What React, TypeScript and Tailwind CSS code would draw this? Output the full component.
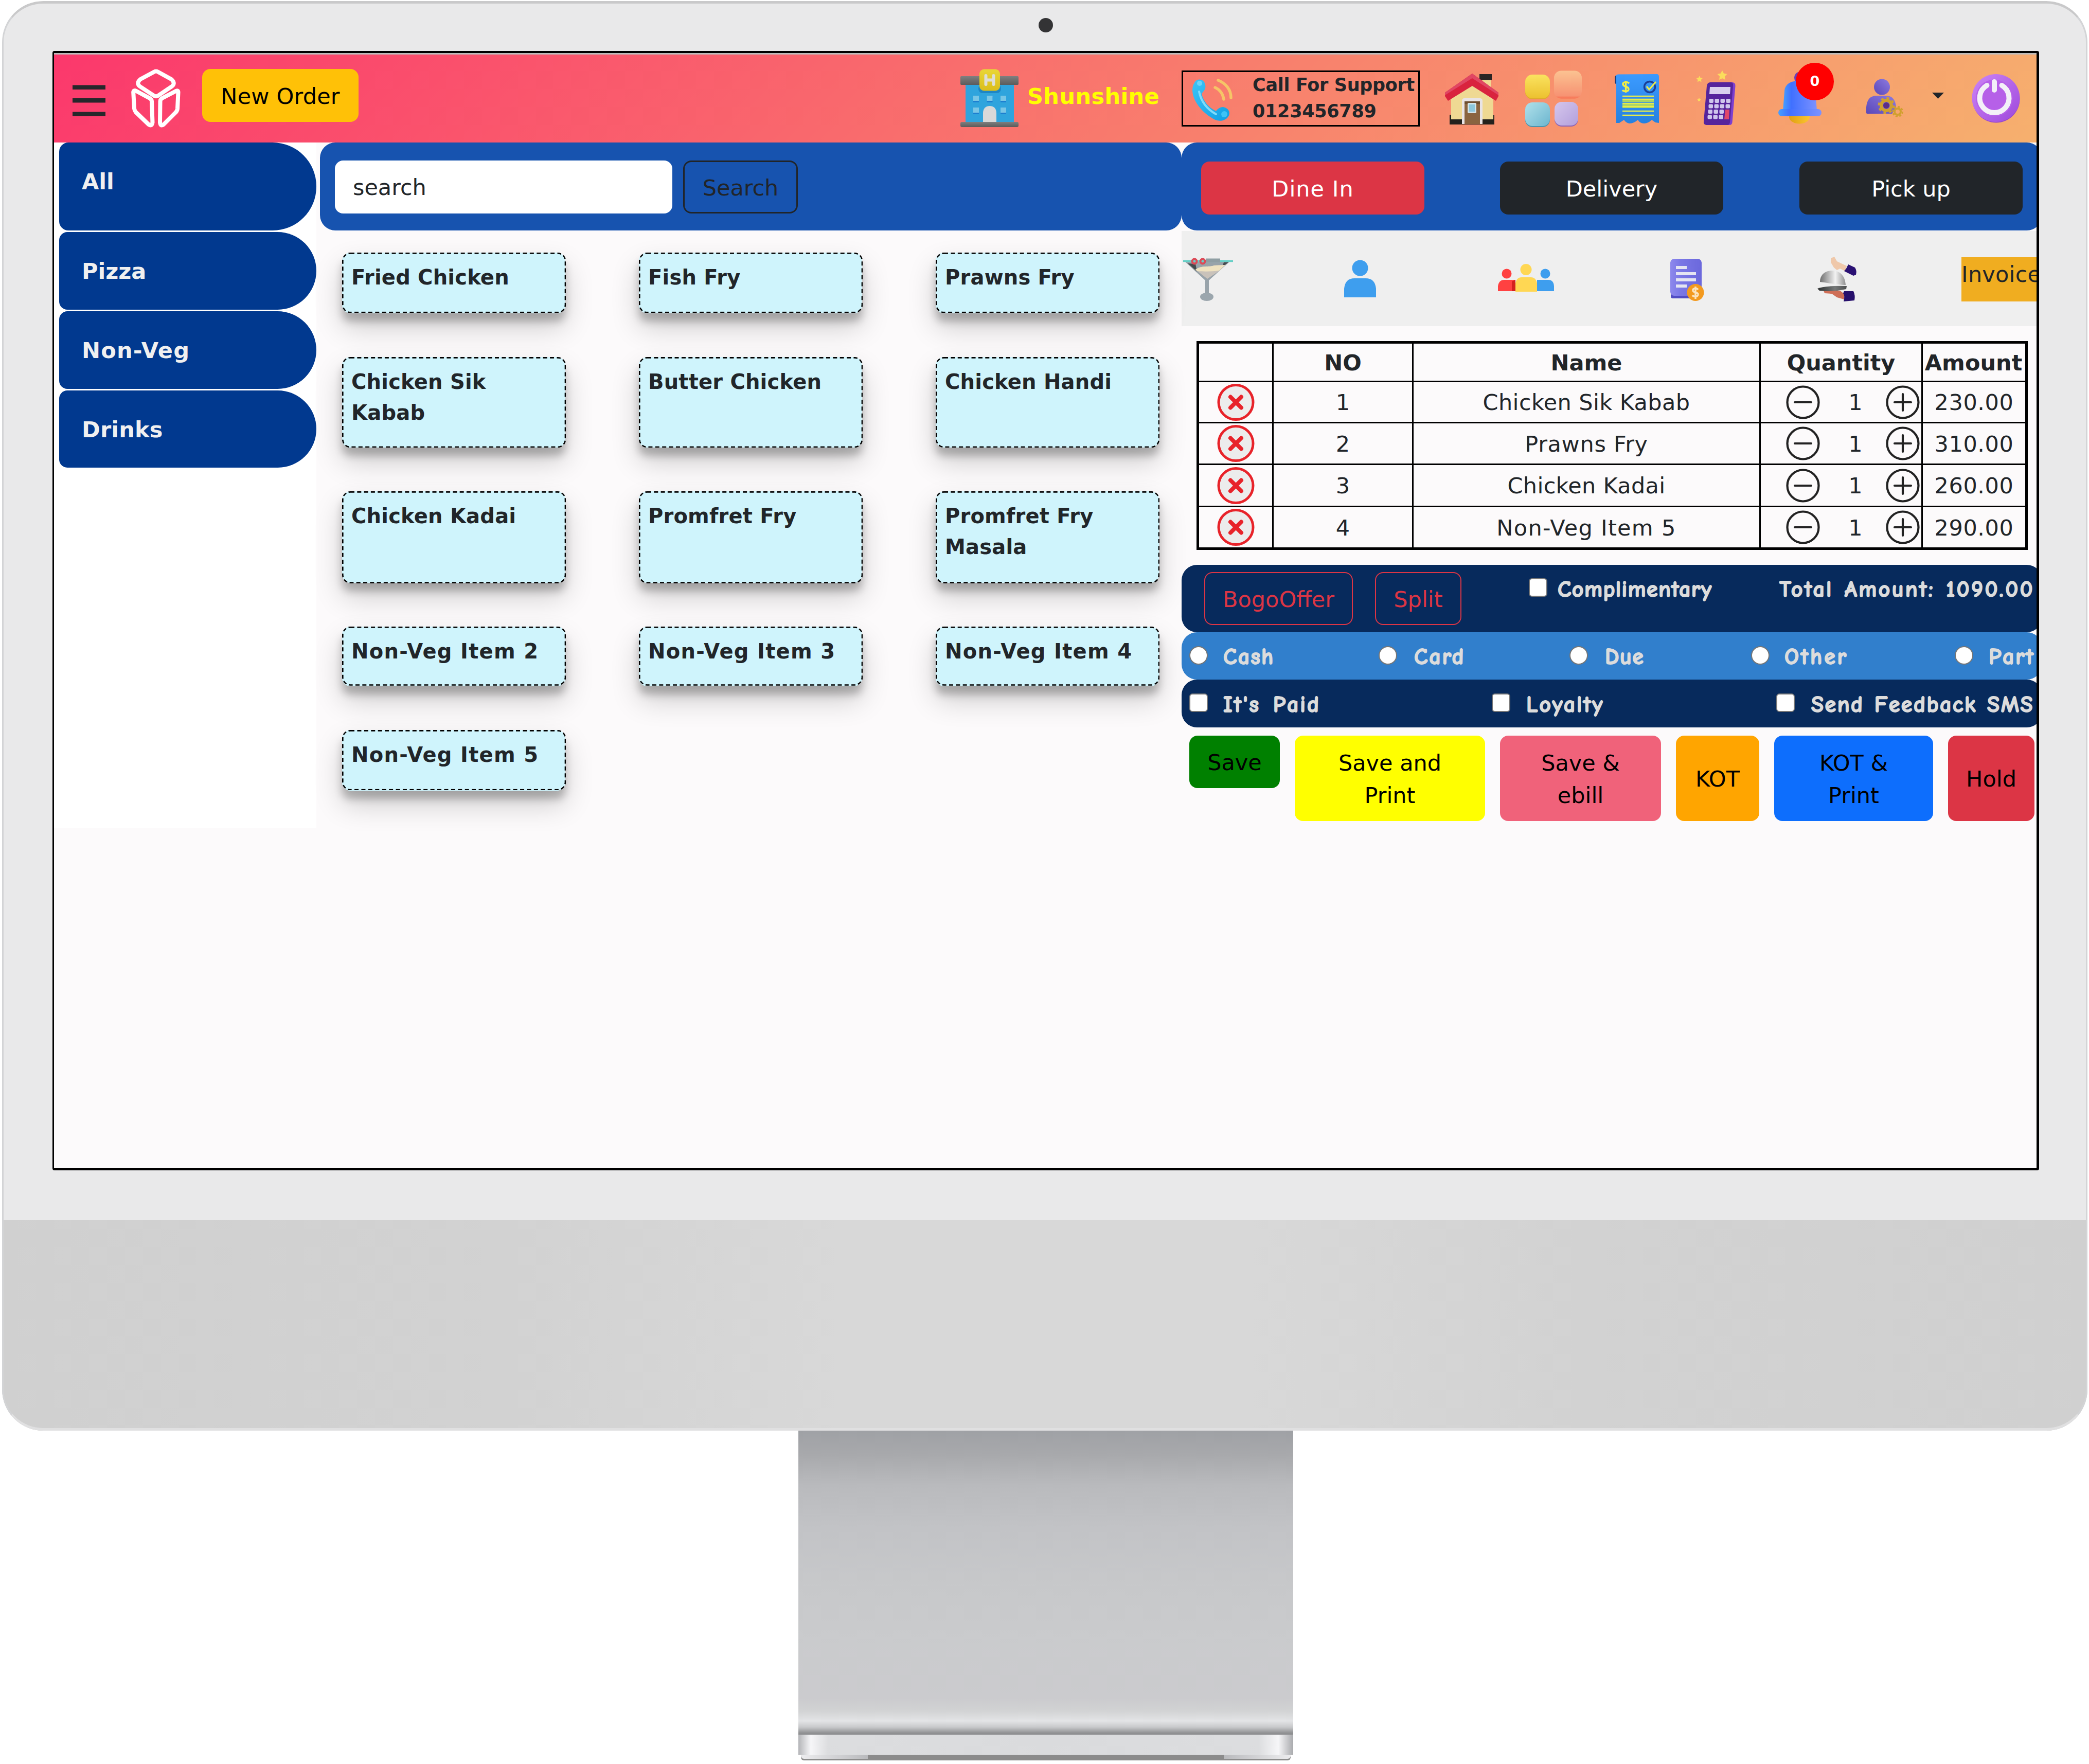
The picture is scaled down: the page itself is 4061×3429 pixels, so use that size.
import React from "react";

/* ---------- header icons ---------- */

const MenuIcon = () => (
  <svg className="ml-[36px] mt-[59px] h-[61px] w-[64px] shrink-0" viewBox="0 0 64 61" fill="#26272b">
    <rect y="0.5" width="64" height="8.5" />
    <rect y="26" width="64" height="8.5" />
    <rect y="52.5" width="64" height="8.5" />
  </svg>
);

const LogoIcon = () => (
  <svg className="ml-[50px] mt-[28px] h-[114px] w-[96px] shrink-0" viewBox="0 0 96 114" fill="none" stroke="#fff" strokeWidth="8" strokeLinejoin="round">
    <path d="M44 6 Q48.3 3 52.600 6 L78 20 Q87 27.500 79 34 L53 51.500 Q48.300 55 43.600 51.500 L17 34 Q9 27.500 18 20 Z" />
    <path d="M4.200 45 Q5 40.500 10 43 L36 57 Q40 59.500 40 63 L41.500 104 Q40 112.500 34 108 L9 84 Q6.500 81 6 77 Z" />
    <path d="M91.500 45 Q91 40.500 86 43.500 L60 57 Q56.500 59.500 56.500 63 L56 104 Q57 112.500 63 108 L87 84 Q89.700 81 90 77 Z" />
  </svg>
);

const HotelIcon = () => (
  <svg className="ml-[1170px] mt-[28px] h-[114px] w-[114px] shrink-0" viewBox="0 0 114 114">
    <defs>
      <linearGradient id="roof" x1="0" y1="0" x2="0" y2="1">
        <stop offset="0" stopColor="#7f7f7f" />
        <stop offset="1" stopColor="#5c5c5c" />
      </linearGradient>
      <linearGradient id="sign" x1="0" y1="0" x2="0" y2="1">
        <stop offset="0" stopColor="#e9d636" />
        <stop offset="1" stopColor="#dabd1c" />
      </linearGradient>
    </defs>
    <rect x="10" y="28" width="94" height="78" fill="#2fa4dd" />
    <rect x="35" y="30" width="44" height="17" rx="8" fill="#1f86c4" />
    <rect x="0" y="14" width="113" height="17" rx="2" fill="url(#roof)" />
    <rect x="0" y="103" width="113" height="10" rx="3" fill="url(#roof)" />
    <rect x="37" y="0.500" width="40" height="42" rx="9" fill="url(#sign)" />
    <path d="M49.500 13 V30 M64.500 13 V30 M49.500 21.500 H64.500" stroke="#deded6" strokeWidth="6" strokeLinecap="round" />
    <g fill="#1d7fd0">
      <rect x="25" y="54" width="11" height="11" /><rect x="51.500" y="54" width="11" height="11" /><rect x="78" y="54" width="11" height="11" />
      <rect x="25" y="77" width="11" height="11" /><rect x="78" y="77" width="11" height="11" />
    </g>
    <g fill="#79c6e6">
      <rect x="25" y="52" width="11" height="10" /><rect x="51.500" y="52" width="11" height="10" /><rect x="78" y="52" width="11" height="10" />
      <rect x="25" y="75" width="11" height="10" /><rect x="78" y="75" width="11" height="10" />
    </g>
    <path d="M44 103 V86 C44 76 50 72 57 72 C64 72 70 76 70 86 V103 Z" fill="#d9d9d9" />
  </svg>
);

const PhoneIcon = () => (
  <svg className="ml-[17px] mt-[12px] h-[84px] w-[82px] shrink-0" viewBox="0 0 82 84" fill="none">
    <defs>
      <linearGradient id="phone" x1="0" y1="0" x2="1" y2="1">
        <stop offset="0" stopColor="#3cc4f6" />
        <stop offset="1" stopColor="#109fe4" />
      </linearGradient>
    </defs>
    <path d="M5 9 C10 -1 24 1 26 13 C28 21 22 26 19 30 C22 44 32 57 47 64 C50 59 58 54 64 57 C76 61 76 75 63 81 C54 85 45 82 37 76 C18 64 2 44 1 24 C1 18 2 13 5 9 Z" fill="url(#phone)" />
    <path d="M14 26 C18 46 29 60 47 70" stroke="#7fdcfb" strokeWidth="4" strokeLinecap="round" />
    <circle cx="15" cy="10" r="5" fill="#6ad5fb" />
    <circle cx="63" cy="70" r="6" fill="#3fc3f5" />
    <path d="M51 4 C66 10 76 22 76 38" stroke="#f6c567" strokeWidth="5.500" strokeLinecap="round" />
    <path d="M45 18 C54 22 60 29 62 41" stroke="#f6c567" strokeWidth="5.500" strokeLinecap="round" />
  </svg>
);

const HouseIcon = () => (
  <svg className="ml-[49px] mt-[37px] h-[100px] w-[105px] shrink-0" viewBox="0 0 105 100">
    <rect x="73" y="10" width="16" height="24" fill="#f0d992" />
    <rect x="67" y="1" width="24" height="12" fill="#2b2524" />
    <path d="M9 80 H12 V89 H96 V99 H9 Z" fill="#23211d" />
    <rect x="93" y="81" width="3" height="18" fill="#23211d" />
    <path d="M12 45 L53 18 L94 45 V89 H12 Z" fill="#efd993" />
    <path d="M53 0 L104 37 V44 L99 53 L53 24 L6 53 L0 44 V37 Z" fill="#d9233e" />
    <path d="M53 0 L104 37 V42 L53 9 L0 42 V37 Z" fill="#e04763" />
    <path d="M33 98 V53 Q33 48 38 48 H68 Q73 48 73 53 V98 Z" fill="#e9e4e6" />
    <rect x="38" y="54" width="30" height="44" fill="#8a6440" />
    <rect x="38" y="54" width="30" height="5" fill="#6e4e30" />
    <rect x="44" y="57" width="17" height="20" rx="2" fill="#d3e4ea" />
    <rect x="47" y="60" width="11" height="14" fill="#8cc7dd" />
  </svg>
);

const AppsIcon = () => (
  <svg className="ml-[50px] mt-[31px] h-[112px] w-[113px] shrink-0" viewBox="0 0 113 112">
    <defs>
      <linearGradient id="ay" x1="0" y1="0" x2="0" y2="1"><stop offset="0" stopColor="#fae360" /><stop offset="1" stopColor="#ecc12f" /></linearGradient>
      <linearGradient id="ap" x1="0" y1="0" x2="0" y2="1"><stop offset="0" stopColor="#fbc291" /><stop offset="0.900" stopColor="#f79373" /><stop offset="1" stopColor="#f86f4f" /></linearGradient>
      <linearGradient id="ac" x1="0" y1="0" x2="1" y2="1"><stop offset="0" stopColor="#b0e0ea" /><stop offset="1" stopColor="#6db7d0" /></linearGradient>
      <linearGradient id="al" x1="0" y1="0" x2="1" y2="1"><stop offset="0" stopColor="#d5c6ec" /><stop offset="1" stopColor="#b3a0dc" /></linearGradient>
    </defs>
    <rect x="1" y="10" width="48" height="46" rx="14" fill="#e0ab2a" />
    <rect x="1" y="8" width="48" height="46" rx="14" fill="url(#ay)" />
    <rect x="57" y="0.500" width="54" height="54" rx="14" fill="url(#ap)" />
    <rect x="1" y="64" width="48" height="46" rx="14" fill="#4c93ad" />
    <rect x="1" y="62" width="48" height="46" rx="14" fill="url(#ac)" />
    <rect x="58" y="63" width="46" height="46" rx="14" fill="#8a62b5" />
    <rect x="58" y="61" width="46" height="46" rx="14" fill="url(#al)" />
  </svg>
);

const BillIcon = () => (
  <svg className="ml-[61px] mt-[38px] h-[97px] w-[89px] shrink-0" viewBox="0 0 89 97" fill="none">
    <defs>
      <linearGradient id="bill" x1="0" y1="0" x2="0" y2="1"><stop offset="0" stopColor="#3b9aff" /><stop offset="1" stopColor="#2581e0" /></linearGradient>
    </defs>
    <rect x="1" y="3" width="8" height="16" rx="3" fill="#1d3c78" />
    <path d="M4 2 Q5 0.500 8 0.500 L84 0 Q87 1 87 5 V95 L80 94 L73 89 Q66 96 58 96 Q50 96 46 89 Q38 96 30 96 Q23 95 19 89 L10 95 H4 Z" fill="url(#bill)" />
    <path d="M29 18 C25 14 16 15 17 20 C18 26 29 23 28 30 C27 35 18 34 16 31 M22.500 13 V36" stroke="#f2ee45" strokeWidth="3.500" />
    <circle cx="69" cy="25" r="10.500" stroke="#1c3f96" strokeWidth="3.500" />
    <path d="M63 24 L68 30 L81 15" stroke="#f2ee45" strokeWidth="3" />
    <g fill="#a8d46a">
      <rect x="16" y="49" width="61" height="5" />
      <rect x="16" y="58" width="61" height="8" />
    </g>
    <g stroke="#e6ec4c" strokeWidth="2.500">
      <path d="M16 43 H77" /><path d="M16 49 H77" /><path d="M16 57 H77" /><path d="M16 63 H77" /><path d="M16 72 H77" /><path d="M16 80 H77" />
    </g>
  </svg>
);

const star = (cx: number, cy: number, r: number) => {
  const pts: string[] = [];
  for (let i = 0; i < 10; i++) {
    const a = (-90 + i * 36) * (Math.PI / 180);
    const q = i % 2 ? r * 0.52 : r;
    pts.push(`${(cx + q * Math.cos(a)).toFixed(1)},${(cy + q * Math.sin(a)).toFixed(1)}`);
  }
  return pts.join(" ");
};

const CalculatorIcon = () => (
  <svg className="ml-[71px] mt-[31px] h-[108px] w-[77px] shrink-0" viewBox="0 0 77 108">
    <g fill="#fbdc5c">
      <polygon points={star(50, 10, 10)} />
      <polygon points={star(5.7, 17, 6.5)} />
      <polygon points={star(5, 57, 4)} />
    </g>
    <path d="M28 23 H70 Q76 24 75.500 30 L69.500 101 Q69 106 64 106 H30 Z" fill="#7b3fd0" />
    <path d="M27 23 H67 Q72 24 71 30 L65 101 Q64 106 60 106 H19 Q13 105 14 99 L20 30 Q21 23 27 23 Z" fill="#56249c" />
    <path d="M26 32 H66 L65 46 H25 Z" fill="#d9d0ee" />
    <g fill="#cfc6ec">
      {[0, 1, 2, 3].map((r) =>
        [0, 1, 2, 3].map((c) =>
          c === 3 && r > 1 ? null : <rect key={`${r}${c}`} x={24.500 + c * 11 - r * 1} y={55 + r * 10.500} width="8.500" height="8" rx="2" />
        )
      )}
    </g>
    <path d="M56 76 H64 L63 95 H54 Z" fill="#e0466a" />
  </svg>
);

const BellIcon = () => (
  <div className="relative ml-[81px] mt-[31px] h-[106px] w-[86px] shrink-0">
    <svg className="h-[106px] w-[86px]" viewBox="0 0 86 106">
      <defs>
        <linearGradient id="bell" x1="0" y1="0" x2="1" y2="0">
          <stop offset="0" stopColor="#45a0ff" /><stop offset="0.250" stopColor="#4070ff" /><stop offset="1" stopColor="#7c92ff" />
        </linearGradient>
        <linearGradient id="clap" x1="0" y1="0" x2="1" y2="0">
          <stop offset="0" stopColor="#e0a012" /><stop offset="1" stopColor="#fbc531" />
        </linearGradient>
      </defs>
      <ellipse cx="42" cy="14" rx="10" ry="11" fill="#6a3fb8" />
      <ellipse cx="42" cy="90" rx="20" ry="13.500" fill="url(#clap)" />
      <path d="M10 78 L13 40 C14 26 26 20 42 20 C60 20 71 26 73 40 L76 78 Z" fill="url(#bell)" />
      <rect x="1" y="75" width="84" height="14" rx="7" fill="url(#bell)" />
    </svg>
    <span className="absolute left-[35px] top-[-15px] flex h-[73px] w-[74px] items-center justify-center rounded-full bg-[#ff0000] text-[27px] font-bold text-white">0</span>
  </div>
);

const UserGearIcon = () => (
  <svg className="ml-[86px] mt-[47px] h-[76px] w-[72px] shrink-0" viewBox="0 0 72 76" fill="none">
    <defs>
      <linearGradient id="usr" x1="1" y1="0" x2="0" y2="1">
        <stop offset="0" stopColor="#8d7ae0" /><stop offset="1" stopColor="#5a48b8" />
      </linearGradient>
    </defs>
    <ellipse cx="30.500" cy="16" rx="15.500" ry="15.500" fill="url(#usr)" />
    <path d="M0 66 V55 Q2 33 20 33 H40 Q56 34 58 55 L50 68 H6 Q0 69 0 66 Z" fill="url(#usr)" />
    <circle cx="39" cy="52" r="10" stroke="#d0a02e" strokeWidth="6" />
    <circle cx="39" cy="52" r="14.500" stroke="#d0a02e" strokeWidth="4" strokeDasharray="5.400 5.990" />
    <circle cx="39" cy="52" r="6" fill="#5b2f86" />
    <circle cx="61" cy="64" r="6" stroke="#d0a02e" strokeWidth="4" />
    <circle cx="61" cy="64" r="9.500" stroke="#d0a02e" strokeWidth="3" strokeDasharray="4 3.460" />
  </svg>
);

const PowerIcon = () => (
  <svg className="ml-[54px] mt-[38px] h-[95px] w-[95px] shrink-0" viewBox="0 0 95 95" fill="none">
    <defs>
      <linearGradient id="pow" x1="0" y1="0" x2="1" y2="1">
        <stop offset="0" stopColor="#cd85f5" /><stop offset="1" stopColor="#9d48dc" />
      </linearGradient>
    </defs>
    <circle cx="47.500" cy="48.500" r="46" fill="#9446cd" />
    <circle cx="47" cy="46.500" r="46.500" fill="url(#pow)" />
    <circle cx="44" cy="46.500" r="36" fill="#b660e8" />
    <path d="M29.500 22 A28.500 28.500 0 1 0 58.500 22" stroke="#f3f0f8" strokeWidth="10" strokeLinecap="round" />
    <path d="M44 15 V31" stroke="#f3f0f8" strokeWidth="10" strokeLinecap="round" />
  </svg>
);

/* ---------- toolbar icons ---------- */

const CocktailIcon = () => (
  <svg className="ml-[3px] mt-[52px] h-[86px] w-[98px] shrink-0" viewBox="0 0 98 86" fill="none">
    <path d="M4 8 H90 L50 44 V70 H43 V44 Z" fill="#98a3aa" />
    <path d="M9 11 L27 27 L24 12 Z" fill="#454b4e" />
    <path d="M88 9 L76 18 L79 9 Z" fill="#454b4e" />
    <path d="M24 23 C36 14 50 19 60 15 L82 14 L68 27 L47 41 Z" fill="#c9c2ba" />
    <path d="M24 23 C36 14 50 19 60 15 L82 14 L70 25 C56 27 40 27 27 26 Z" fill="#efe2c0" />
    <path d="M0 6.500 H97" stroke="#66cfc6" strokeWidth="3.500" />
    <path d="M44 5 H72" stroke="#8f9ea3" strokeWidth="7" />
    <ellipse cx="22" cy="7" rx="4.500" ry="4.500" stroke="#dc4a57" strokeWidth="4" />
    <ellipse cx="38" cy="7" rx="4.500" ry="4.500" stroke="#dc4a57" strokeWidth="4" />
    <ellipse cx="46" cy="76" rx="13" ry="8" fill="#9ba6ad" />
  </svg>
);

const PersonIcon = () => (
  <svg className="ml-[215px] mt-[56px] h-[73px] w-[62px] shrink-0" viewBox="0 0 62 73" fill="#3e9eee">
    <circle cx="31" cy="16" r="15.500" />
    <path d="M0 73 V56 Q2 36 20 36 H42 Q60 36 62 56 V73 Z" />
  </svg>
);

const GroupIcon = () => (
  <svg className="ml-[237px] mt-[64px] h-[54px] w-[110px] shrink-0" viewBox="0 0 110 54">
    <circle cx="17" cy="19" r="9.500" fill="#ff4141" />
    <path d="M0 53 V43 Q2 31 12 31 H34 V53 Z" fill="#ff4141" />
    <path d="M27 34 L34 31 V53 H27 Z" fill="#d3211f" />
    <circle cx="92" cy="19" r="9.500" fill="#3e9eee" />
    <path d="M76 53 V31 H98 Q108 31 109 43 V53 Z" fill="#3e9eee" />
    <circle cx="54.500" cy="11" r="11" fill="#ffd753" />
    <path d="M34 54 V38 Q36 26 46 26 H64 Q74 26 76 38 V54 Z" fill="#ffd753" />
  </svg>
);

const InvoiceDocIcon = () => (
  <svg className="ml-[225px] mt-[54px] h-[83px] w-[66px] shrink-0" viewBox="0 0 66 83" fill="none">
    <defs>
      <linearGradient id="doc" x1="0" y1="0" x2="1" y2="0">
        <stop offset="0" stopColor="#8d88ec" /><stop offset="0.300" stopColor="#7b78e6" /><stop offset="1" stopColor="#6b68dc" />
      </linearGradient>
    </defs>
    <rect x="1" y="8" width="58" height="69" rx="4" fill="#514cc4" />
    <rect x="0" y="0" width="61" height="72" rx="8" fill="url(#doc)" />
    <g fill="#e4e4f2">
      <rect x="11" y="14" width="21" height="6" /><rect x="11" y="26" width="39" height="6" />
      <rect x="11" y="38" width="39" height="6" /><rect x="11" y="50" width="21" height="6" />
    </g>
    <circle cx="49" cy="65.500" r="16.500" fill="#f39a1f" />
    <path d="M54 60 C51 56 43 57 44 62 C45 67 55 64 54 70 C53 75 45 74 43 71 M49 54 V78" stroke="#fbe3bd" strokeWidth="3.500" />
  </svg>
);

const ClocheIcon = () => (
  <svg className="ml-[220px] mt-[49px] h-[88px] w-[77px] shrink-0" viewBox="0 0 77 88">
    <defs>
      <linearGradient id="dome" x1="0" y1="0" x2="1" y2="0">
        <stop offset="0" stopColor="#6f6f6f" /><stop offset="0.600" stopColor="#f2f2f2" /><stop offset="1" stopColor="#8f8f8f" />
      </linearGradient>
      <linearGradient id="tray" x1="0" y1="0" x2="1" y2="0">
        <stop offset="0" stopColor="#2c2f2f" /><stop offset="0.600" stopColor="#757878" /><stop offset="1" stopColor="#4a4c4c" />
      </linearGradient>
    </defs>
    <path d="M26 4 L33 1 L38 10 L57 19 L54 29 L44 24 L38 27 L32 22 L26 12 Z" fill="#efc8aa" />
    <path d="M60 16 L73 22 Q77 28 75 36 L70 38 L52 29 L56 24 Z" fill="#2a1173" />
    <path d="M5 50 C5 37 14 28 28 28 C44 28 54 38 55 56 C40 56 22 52 5 50 Z" fill="url(#dome)" />
    <path d="M12 67 L44 67 L53 74 L52 84 L38 80 L28 73 L14 72 Z" fill="#cf6f57" />
    <path d="M0 63 Q14 57 57 58 L56 64 Q30 70 4 67 Z" fill="url(#tray)" />
    <path d="M52 68 H70 Q74 76 72 86 L51 88 Q54 76 50 72 Z" fill="#27106c" />
  </svg>
);

/* ---------- table icons ---------- */

const RemoveIcon = () => (
  <svg className="h-[72px] w-[73px]" viewBox="0 0 73 72" fill="none" stroke="#e8232a">
    <circle cx="36.500" cy="36" r="33.500" strokeWidth="5" fill="#ececec" />
    <path d="M26 25.500 L47 46.500 M47 25.500 L26 46.500" strokeWidth="8" strokeLinecap="round" />
  </svg>
);

const StepIcon = ({ plus }: { plus?: boolean }) => (
  <svg className="h-[66px] w-[66px]" viewBox="0 0 66 66" fill="none" stroke="#222" strokeWidth="4.200" strokeLinecap="round">
    <circle cx="33" cy="33" r="30.500" />
    <path d="M17 33 H49" />
    {plus && <path d="M33 17 V49" />}
  </svg>
);

/* ---------- data ---------- */

const categories = [
  { name: "All", box: "h-[171px]" },
  { name: "Pizza", box: "h-[151px]" },
  { name: "Non-Veg", box: "h-[151px] tracking-[1.2px]" },
  { name: "Drinks", box: "h-[150px] tracking-[0.2px]" },
];

const dishRows = [
  { h: "h-[118px] tracking-[0.2px]", items: ["Fried Chicken", "Fish Fry", "Prawns Fry"] },
  { h: "h-[176px] tracking-[0.2px]", items: ["Chicken Sik Kabab", "Butter Chicken", "Chicken Handi"] },
  { h: "h-[178px] tracking-[0.2px]", items: ["Chicken Kadai", "Promfret Fry", "Promfret Fry Masala"] },
  { h: "h-[116px] tracking-[1.3px]", items: ["Non-Veg Item 2", "Non-Veg Item 3", "Non-Veg Item 4"] },
  { h: "h-[118px] tracking-[1.3px]", items: ["Non-Veg Item 5"] },
];

const orderRows = [
  { name: "Chicken Sik Kabab", amount: "230.00", h: "h-[80px]", track: "tracking-[0.4px]" },
  { name: "Prawns Fry", amount: "310.00", h: "h-[81px]", track: "tracking-[0.7px]" },
  { name: "Chicken Kadai", amount: "260.00", h: "h-[82px]", track: "tracking-[0.3px]" },
  { name: "Non-Veg Item 5", amount: "290.00", h: "h-[78px]", track: "tracking-[1.3px]" },
];

/* ---------- small parts ---------- */

const ModeButton = ({ label, style, gap }: { label: string; style: string; gap: string }) => (
  <button className={`${gap} ${style} mt-[37px] h-[103px] w-[434px] shrink-0 rounded-[16px] pt-[2px] text-[43px] leading-[60px] text-white`}>{label}</button>
);

const Box = ({ round, pos }: { round?: boolean; pos: string }) => (
  <span className={`${pos} ${round ? "rounded-full" : "rounded-[6px]"} h-[36px] w-[36px] shrink-0 border-[2px] border-[#767676] bg-white`} />
);

const Tag = ({ children, pos }: { children: React.ReactNode; pos: string }) => (
  <span className={`${pos} shrink-0 whitespace-nowrap font-['Comic_Sans_MS','Comic_Neue','Open_Sans',sans-serif] text-[44px] font-bold leading-[60px] text-[#dcdcdc] [-webkit-text-stroke:1.8px_#dcdcdc]`}>{children}</span>
);

const Header = () => (
  <header className="flex h-[171px] items-start bg-[linear-gradient(135deg,#fb386c_0%,#f6b06e_100%)]">
    <MenuIcon />
    <LogoIcon />
    <button className="ml-[42px] mt-[28px] h-[103px] w-[304px] shrink-0 rounded-[16px] bg-[#ffc107] pt-[4px] text-[43px] tracking-[0.2px] text-black">New Order</button>
    <HotelIcon />
    <span className="ml-[16px] mt-[51px] w-[256px] shrink-0 whitespace-nowrap text-[43px] font-bold leading-[60px] tracking-[0.4px] text-[#ffff00]">Shunshine</span>
    <div className="ml-[44px] mt-[31px] flex h-[109px] w-[463px] shrink-0 items-start border-[3px] border-black">
      <PhoneIcon />
      <p className="ml-[36px] whitespace-nowrap text-[35px] font-bold leading-[51px] tracking-[-0.3px] text-[#212529]">
        Call For Support
        <br />
        0123456789
      </p>
    </div>
    <HouseIcon />
    <AppsIcon />
    <BillIcon />
    <CalculatorIcon />
    <BellIcon />
    <UserGearIcon />
    <svg className="ml-[56px] mt-[74px] h-[12px] w-[23px] shrink-0" viewBox="0 0 23 12" fill="#212529">
      <path d="M0 0 H23 L11.500 12 Z" />
    </svg>
    <PowerIcon />
  </header>
);

const Sidebar = () => (
  <nav className="flex h-[1333px] w-[510px] shrink-0 flex-col gap-[3px] bg-white pl-[10px]">
    {categories.map((c) => (
      <div key={c.name} className={`${c.box} shrink-0 rounded-l-[18px] rounded-r-[85px] bg-[#01398f] pl-[44px] pt-[46px] text-[43px] font-bold leading-[60px] text-[#f0f0f0]`}>
        {c.name}
      </div>
    ))}
  </nav>
);

const Menu = () => (
  <main className="ml-[7px] w-[1675px] shrink-0">
    <div className="flex h-[171px] items-start rounded-[30px] bg-[#1753af] pl-[29px] pt-[35px]">
      <div className="h-[103px] w-[656px] rounded-[16px] bg-white pl-[35px] pt-[22px] text-[43px] leading-[60px] text-[#212529]">search</div>
      <button className="ml-[21px] h-[103px] w-[223px] rounded-[16px] border-[3px] border-[#212529] pt-[2px] text-[43px] leading-[60px] text-[#212529]">Search</button>
    </div>
    <div className="flex flex-col gap-[85px] pl-[43px] pt-[43px]">
      {dishRows.map((row, i) => (
        <div key={i} className="flex gap-[143px]">
          {row.items.map((d) => (
            <div
              key={d}
              className={`${row.h} relative w-[434px] rounded-[16px] bg-[#cff4fc] px-[18px] pt-[18px] text-[40px] font-bold leading-[60px] text-[#212529] shadow-[0_27px_54px_rgba(0,0,0,0.19),0_16px_16px_rgba(0,0,0,0.23)]`}
            >
              {d}
              <span className="pointer-events-none absolute left-0 top-0 h-[37.453%] w-[37.453%] origin-top-left scale-[2.67] rounded-[6px] border border-dashed border-black" />
            </div>
          ))}
        </div>
      ))}
    </div>
  </main>
);

const cols = "grid grid-cols-[145px_272px_675px_315px_199px]";
const cell = "flex items-center justify-center border-r-[3px] border-black";

const OrderTable = () => (
  <div className="ml-[29px] mt-[29px] w-[1616px] border-[5px] border-black text-[43px] leading-[60px] text-[#212529]">
    <div className={`${cols} h-[75px] border-b-[3px] border-black font-bold`}>
      <div className={cell} />
      <div className={`${cell} pt-[2px]`}>NO</div>
      <div className={`${cell} pt-[2px]`}>Name</div>
      <div className={`${cell} pt-[2px]`}>Quantity</div>
      <div className="flex items-center justify-center pr-[2px] pt-[2px]">Amount</div>
    </div>
    {orderRows.map((r, i) => (
      <div key={r.name} className={`${cols} ${r.h} border-b-[3px] border-black last:border-b-0`}>
        <div className={cell}><RemoveIcon /></div>
        <div className={`${cell} pt-px`}>{i + 1}</div>
        <div className={`${cell} ${r.track} pt-px`}>{r.name}</div>
        <div className="flex items-center border-r-[3px] border-black pl-[49px]">
          <StepIcon />
          <span className="w-[128px] pl-[10px] pt-px text-center">1</span>
          <StepIcon plus />
        </div>
        <div className="flex items-center justify-center pt-px tracking-[0.6px]">{r.amount}</div>
      </div>
    ))}
  </div>
);

const Order = () => (
  <section className="w-[1673px] shrink-0">
    <div className="flex h-[171px] items-start rounded-[30px] bg-[#1753af]">
      <ModeButton label="Dine In" style="bg-[#dc3545] tracking-[1px]" gap="ml-[38px]" />
      <ModeButton label="Delivery" style="bg-[#212529]" gap="ml-[147px]" />
      <ModeButton label="Pick up" style="bg-[#212529]" gap="ml-[148px]" />
    </div>
    <div className="mt-px flex h-[185px] items-start bg-[#efefef]">
      <CocktailIcon />
      <PersonIcon />
      <GroupIcon />
      <InvoiceDocIcon />
      <ClocheIcon />
      <div className="ml-[203px] mt-[51px] h-[86px] w-[180px] shrink-0 bg-[#f0ad20] pt-[3px] text-[43px] leading-[60px] tracking-[0.2px] text-[#212529]">Invoice</div>
    </div>
    <OrderTable />
    <div className="mt-[29px] flex h-[131px] items-start rounded-[30px] bg-[#072a5c]">
      <button className="ml-[44px] mt-[14px] h-[103px] w-[289px] shrink-0 rounded-[16px] border-[2.500px] border-[#dc3545] pt-[2px] text-[43px] leading-[60px] text-[#dc3545]">BogoOffer</button>
      <button className="ml-[43px] mt-[14px] h-[103px] w-[168px] shrink-0 rounded-[16px] border-[2.500px] border-[#dc3545] pt-[2px] text-[43px] leading-[60px] text-[#dc3545]">Split</button>
      <Box pos="ml-[131px] mt-[26px]" />
      <Tag pos="ml-[20px] mt-[18px] w-[431px] tracking-[1.4px]">Complimentary</Tag>
      <Tag pos="mt-[18px] tracking-[3.3px] [word-spacing:3px]">Total Amount: 1090.00</Tag>
    </div>
    <div className="flex h-[92px] items-start rounded-[30px] bg-[#317fcc]">
      <Box round pos="ml-[15px] mt-[27px]" />
      <Tag pos="ml-[30px] mt-[18px] w-[302px] tracking-[2.2px]">Cash</Tag>
      <Box round pos="mt-[27px]" />
      <Tag pos="ml-[33px] mt-[18px] w-[302px] tracking-[2.800px]">Card</Tag>
      <Box round pos="mt-[27px]" />
      <Tag pos="ml-[33px] mt-[18px] w-[284px] tracking-[1.500px]">Due</Tag>
      <Box round pos="mt-[27px]" />
      <Tag pos="ml-[29px] mt-[18px] w-[331px] tracking-[3.800px]">Other</Tag>
      <Box round pos="mt-[27px]" />
      <Tag pos="ml-[30px] mt-[18px] tracking-[2.600px]">Part</Tag>
    </div>
    <div className="flex h-[93px] items-start rounded-[30px] bg-[#072a5c]">
      <Box pos="ml-[15px] mt-[27px]" />
      <Tag pos="ml-[30px] mt-[19px] w-[522px] tracking-[3px] [word-spacing:6px]">It's Paid</Tag>
      <Box pos="mt-[27px]" />
      <Tag pos="ml-[31px] mt-[19px] w-[486px] tracking-[2.800px]">Loyalty</Tag>
      <Box pos="mt-[27px]" />
      <Tag pos="ml-[32px] mt-[19px] tracking-[2.5px] [word-spacing:2px]">Send Feedback SMS</Tag>
    </div>
    <div className="mt-[16px] flex items-start gap-[29px] pl-[15px] text-[43px] leading-[63px] text-black">
      <button className="h-[102px] w-[176px] shrink-0 rounded-[16px] bg-[#008000] pt-[3px]">Save</button>
      <button className="h-[166px] w-[370px] shrink-0 rounded-[16px] bg-[#ffff00] px-[60px] pt-[3px]">Save and Print</button>
      <button className="h-[166px] w-[313px] shrink-0 rounded-[16px] bg-[#f0627a] px-[60px] pt-[3px]">Save &amp; ebill</button>
      <button className="h-[166px] w-[162px] shrink-0 rounded-[16px] bg-[#ffa500] pt-[3px]">KOT</button>
      <button className="h-[166px] w-[309px] shrink-0 rounded-[16px] bg-[#0d6efd] px-[60px] pt-[3px]">KOT &amp; Print</button>
      <button className="h-[166px] w-[168px] shrink-0 rounded-[16px] bg-[#dc3545] pt-[3px]">Hold</button>
    </div>
  </section>
);

const Stand = () => (
  <div className="ml-[1552px] w-[962px]">
    <div className="h-[591px] bg-[linear-gradient(180deg,#9fa1a5_0%,#a8a9ac_8%,#b9babd_18%,#c2c3c6_32%,#c7c8ca_50%,#cacbcd_70%,#cbcbce_88%,#d1d2d3_92%,#e3e4e6_95.500%,#c8c9cb_97.500%,#8f9092_99.500%,#8f9092_100%)]" />
    <div className="h-[39px] bg-[linear-gradient(90deg,#b4b5b8_0%,#f6f6f8_2.500%,#dcdddf_6%,#dadbdd_50%,#dcdddf_93%,#f6f6f8_97%,#a9aaad_100%)]" />
    <div className="mx-[5px] flex h-[11px] justify-between rounded-b-[6px] bg-[#8b8b8b]">
      <div className="h-[8px] w-[130px] rounded-bl-[6px] bg-[linear-gradient(90deg,#ececee,#b9babd)]" />
      <div className="h-[8px] w-[130px] rounded-br-[6px] bg-[linear-gradient(270deg,#ececee,#b9babd)]" />
    </div>
  </div>
);

export default function App() {
  return (
    <div className="h-[3429px] w-[4061px] overflow-hidden bg-white pt-[2px] font-['DejaVu_Sans',sans-serif]">
      <div className="relative ml-[4px] h-[2779px] w-[4054px] overflow-hidden rounded-[80px] bg-[#e9e9ea] pl-[98px] pt-[97px]">
        <span className="absolute left-[2015px] top-[33px] h-[28px] w-[28px] rounded-full bg-[#333335]" />
        <div className="flex h-[2176px] w-[3862px] flex-col overflow-hidden rounded-[4px] border-b-[5px] border-l-[3px] border-r-[5px] border-t-[4px] border-black bg-[#fcfafb]">
          <div className="h-[3px] shrink-0 bg-[#bcbcbc]" />
          <Header />
          <div className="flex items-start">
            <Sidebar />
            <Menu />
            <Order />
          </div>
        </div>
        <div className="-ml-[98px] mt-[97px] h-[409px] bg-[linear-gradient(90deg,#d0d0d0_0%,#d2d2d2_24%,#d8d8d8_40%,#d8d8d8_60%,#d2d2d2_76%,#d0d0d0_100%)]" />
        <div className="pointer-events-none absolute inset-0 rounded-[80px] border-[3px] border-b-[5px] border-t-[5px] border-[#d3d4d6] border-b-[#e0e0e1] border-t-[#c9c9ca]" />
      </div>
      <Stand />
    </div>
  );
}
